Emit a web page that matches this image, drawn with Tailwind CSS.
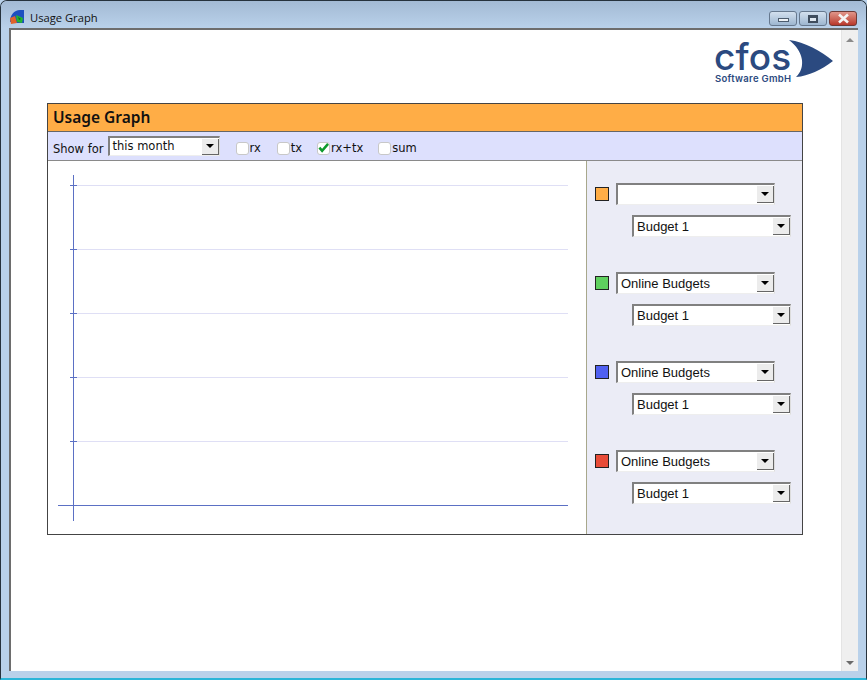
<!DOCTYPE html>
<html lang="en">
<head>
  <meta charset="UTF-8" />
  <title>Usage Graph</title>
  <script src="https://cdn.jsdelivr.net/npm/@tailwindcss/browser@4"></script>
</head>
<body class="bg-[#b9d1ea]">

  <div class="w-[867px] h-[680px] flex flex-col overflow-hidden rounded-t-[7px] border-x border-t border-[#26323c] border-b-2 border-b-[#2bb5d8] bg-[#b9d1ea]">

    <!-- TITLE BAR -->
    <header class="h-[27px] shrink-0 flex items-center justify-between pl-[8px] pr-[9px] bg-gradient-to-b from-[#a3bad4] to-[#b9d1ea]">
      <div class="flex items-center gap-[5px] mt-[5px]">
        <svg width="16" height="16" viewBox="0 0 16 16">
          <path d="M1 13 C1 6 5 1 11 1 L15 1 L15 14 L6 14 L6 12 L1 13Z" fill="#1c4fc0" />
          <path d="M1 9 L6 7 L8 14 L2 15Z" fill="#e0622a" />
          <path d="M7 6 L14 9 L13 14 L8 13Z" fill="#22b52e" />
          <path d="M9 8 L12 10 L10 11Z" fill="#0e6a20" />
        </svg>
        <span class="font-['Open_Sans'] text-[11.2px] text-[#111] mt-[2px]">Usage Graph</span>
      </div>
      <div class="flex gap-[2px] mt-[8px]">
        <div class="w-[28px] h-[15px] flex items-center justify-center rounded-[3px] border border-[#66788e] bg-gradient-to-b from-[#d3e0ee] to-[#9db6d0]">
          <div class="w-[11px] h-[4px] mt-[3px] bg-[#eef2f6] border border-[#4d5c6e]"></div>
        </div>
        <div class="w-[28px] h-[15px] flex items-center justify-center rounded-[3px] border border-[#66788e] bg-gradient-to-b from-[#d3e0ee] to-[#9db6d0]">
          <div class="w-[10px] h-[8px] border-2 border-t-[3px] border-[#3f4d5e] bg-[#dfe8f1]"></div>
        </div>
        <div class="w-[28px] h-[15px] flex items-center justify-center rounded-[3px] border border-[#6e3a36] bg-gradient-to-b from-[#e0958a] to-[#b8362a]">
          <svg width="13" height="11" viewBox="0 0 13 11"><path d="M2 1.5 L11 9.5 M11 1.5 L2 9.5" stroke="#f4f4f4" stroke-width="2.6" /></svg>
        </div>
      </div>
    </header>

    <!-- CLIENT AREA -->
    <div class="flex-1 flex mx-[8px] mb-[7px] border-t-2 border-l-2 border-[#6d6d6d] bg-white min-h-0">
      <main class="flex-1 min-w-0 flex flex-col">

        <!-- LOGO -->
        <div class="h-[73px] shrink-0 flex justify-end items-start pr-[7px] pt-[7px]">
          <div class="relative w-[120px] h-[50px]">
            <span class="absolute left-0 top-[5px] font-['Inter'] font-medium text-[37px] leading-[30px] tracking-[0.2px] text-[#2b4a80]">cfos</span>
            <span class="absolute left-px top-[36px] font-['Inter'] font-semibold text-[9.5px] leading-[11px] tracking-[0.3px] text-[#2b4a80]">Software GmbH</span>
            <svg class="absolute left-[75px] top-[3px]" width="46" height="38" viewBox="0 0 46 38">
              <path d="M0 0 C16 2 32 11 44 21 C32 30 20 36 7 37 C17 28 15 11 0 0Z" fill="#2b4a80" />
            </svg>
          </div>
        </div>

        <!-- CARD -->
        <section class="w-[756px] h-[432px] ml-[36px] flex flex-col border border-[#444]">
          <h1 class="h-[28px] shrink-0 flex items-center pl-[5px] bg-[#ffad46] font-['Noto_Sans'] font-semibold text-[15.5px] text-[#111] border-b border-[#666]">Usage Graph</h1>

          <div class="h-[29px] shrink-0 flex items-center pl-[5px] bg-[#dde0fd] border-b border-[#8a8a8a] font-['DejaVu_Sans'] text-[11.5px] text-[#111]">
            <span class="mt-[7px]">Show for</span>
            <div class="ml-[4px] w-[112px] h-[20px] flex items-center justify-between bg-white border-2 border-r border-b border-[#808080] border-r-[#ddd] border-b-[#eee]">
              <span class="pl-[3px] text-[11.5px] text-[#111]">this month</span>
              <div class="w-[17px] h-[16px] flex items-center justify-center bg-[#ececec] border-r border-b border-[#666]">
                <div class="border-x-[4px] border-t-[4px] border-x-transparent border-t-black"></div>
              </div>
            </div>
            <label class="ml-[16px] flex items-center mt-[4px]">
              <span class="w-[13px] h-[13px] rounded-[3px] border border-[#c8c8c8] bg-white"></span><span class="ml-px mt-px">rx</span>
            </label>
            <label class="ml-[16px] flex items-center mt-[4px]">
              <span class="w-[13px] h-[13px] rounded-[3px] border border-[#c8c8c8] bg-white"></span><span class="ml-px mt-px">tx</span>
            </label>
            <label class="ml-[15px] flex items-center mt-[4px]">
              <span class="w-[13px] h-[13px] rounded-[3px] border border-[#c8c8c8] bg-white flex items-center justify-center">
                <svg width="12" height="11" viewBox="0 0 12 11"><path d="M1.5 4.5 L4.5 8 L11 0.5" fill="none" stroke="#0e9a2c" stroke-width="2.8" /></svg>
              </span><span class="ml-px mt-px">rx+tx</span>
            </label>
            <label class="ml-[15px] flex items-center mt-[4px]">
              <span class="w-[13px] h-[13px] rounded-[3px] border border-[#c8c8c8] bg-white"></span><span class="ml-px mt-px">sum</span>
            </label>
          </div>

          <div class="flex-1 flex min-h-0">
            <!-- CHART -->
            <div class="w-[538px] shrink-0 bg-white">
              <svg width="538" height="373" viewBox="0 0 538 373">
                <g stroke="#dfdff5" stroke-width="1">
                  <path d="M26 24.5 H520" /><path d="M26 88.5 H520" /><path d="M26 152.5 H520" /><path d="M26 216.5 H520" /><path d="M26 280.5 H520" />
                </g>
                <g stroke="#5b70c4" stroke-width="1">
                  <path d="M25.5 14 V360" />
                  <path d="M10 344.5 H520" />
                  <path d="M22 24.5 H29" /><path d="M22 88.5 H29" /><path d="M22 152.5 H29" /><path d="M22 216.5 H29" /><path d="M22 280.5 H29" />
                </g>
              </svg>
            </div>

            <!-- SIDE PANEL -->
            <aside class="flex-1 bg-[#ebecf6] border-l border-[#a8a88c] pt-[22px] pl-[8px] font-['Liberation_Sans'] text-[13px] text-[#111] flex flex-col gap-[35px]">
              <div class="flex flex-col gap-[10px]">
                <div class="flex items-center gap-[7px]">
                  <span class="w-[14px] h-[14px] border border-[#222] bg-[#ffad46]"></span>
                  <div class="w-[159px] h-[22px] flex items-center justify-between bg-white border-2 border-r border-b border-[#808080] border-r-[#ddd] border-b-[#eee]">
                    <span class="pl-[3px]"></span>
                    <div class="w-[17px] h-[17px] flex items-center justify-center bg-[#ececec] border-r border-b border-[#666]"><div class="border-x-[4px] border-t-[4px] border-x-transparent border-t-black"></div></div>
                  </div>
                </div>
                <div class="ml-[37px] w-[159px] h-[22px] flex items-center justify-between bg-white border-2 border-r border-b border-[#808080] border-r-[#ddd] border-b-[#eee]">
                  <span class="pl-[3px]">Budget 1</span>
                  <div class="w-[17px] h-[17px] flex items-center justify-center bg-[#ececec] border-r border-b border-[#666]"><div class="border-x-[4px] border-t-[4px] border-x-transparent border-t-black"></div></div>
                </div>
              </div>
              <div class="flex flex-col gap-[10px]">
                <div class="flex items-center gap-[7px]">
                  <span class="w-[14px] h-[14px] border border-[#222] bg-[#5fd05f]"></span>
                  <div class="w-[159px] h-[22px] flex items-center justify-between bg-white border-2 border-r border-b border-[#808080] border-r-[#ddd] border-b-[#eee]">
                    <span class="pl-[3px]">Online Budgets</span>
                    <div class="w-[17px] h-[17px] flex items-center justify-center bg-[#ececec] border-r border-b border-[#666]"><div class="border-x-[4px] border-t-[4px] border-x-transparent border-t-black"></div></div>
                  </div>
                </div>
                <div class="ml-[37px] w-[159px] h-[22px] flex items-center justify-between bg-white border-2 border-r border-b border-[#808080] border-r-[#ddd] border-b-[#eee]">
                  <span class="pl-[3px]">Budget 1</span>
                  <div class="w-[17px] h-[17px] flex items-center justify-center bg-[#ececec] border-r border-b border-[#666]"><div class="border-x-[4px] border-t-[4px] border-x-transparent border-t-black"></div></div>
                </div>
              </div>
              <div class="flex flex-col gap-[10px]">
                <div class="flex items-center gap-[7px]">
                  <span class="w-[14px] h-[14px] border border-[#222] bg-[#5060f0]"></span>
                  <div class="w-[159px] h-[22px] flex items-center justify-between bg-white border-2 border-r border-b border-[#808080] border-r-[#ddd] border-b-[#eee]">
                    <span class="pl-[3px]">Online Budgets</span>
                    <div class="w-[17px] h-[17px] flex items-center justify-center bg-[#ececec] border-r border-b border-[#666]"><div class="border-x-[4px] border-t-[4px] border-x-transparent border-t-black"></div></div>
                  </div>
                </div>
                <div class="ml-[37px] w-[159px] h-[22px] flex items-center justify-between bg-white border-2 border-r border-b border-[#808080] border-r-[#ddd] border-b-[#eee]">
                  <span class="pl-[3px]">Budget 1</span>
                  <div class="w-[17px] h-[17px] flex items-center justify-center bg-[#ececec] border-r border-b border-[#666]"><div class="border-x-[4px] border-t-[4px] border-x-transparent border-t-black"></div></div>
                </div>
              </div>
              <div class="flex flex-col gap-[10px]">
                <div class="flex items-center gap-[7px]">
                  <span class="w-[14px] h-[14px] border border-[#222] bg-[#e84c38]"></span>
                  <div class="w-[159px] h-[22px] flex items-center justify-between bg-white border-2 border-r border-b border-[#808080] border-r-[#ddd] border-b-[#eee]">
                    <span class="pl-[3px]">Online Budgets</span>
                    <div class="w-[17px] h-[17px] flex items-center justify-center bg-[#ececec] border-r border-b border-[#666]"><div class="border-x-[4px] border-t-[4px] border-x-transparent border-t-black"></div></div>
                  </div>
                </div>
                <div class="ml-[37px] w-[159px] h-[22px] flex items-center justify-between bg-white border-2 border-r border-b border-[#808080] border-r-[#ddd] border-b-[#eee]">
                  <span class="pl-[3px]">Budget 1</span>
                  <div class="w-[17px] h-[17px] flex items-center justify-center bg-[#ececec] border-r border-b border-[#666]"><div class="border-x-[4px] border-t-[4px] border-x-transparent border-t-black"></div></div>
                </div>
              </div>
            </aside>
          </div>
        </section>
      </main>

      <!-- SCROLLBAR -->
      <div class="w-[17px] shrink-0 flex flex-col justify-between items-center pt-[8px] pb-[6px] bg-[#efefef] border-l border-[#e4e4e4]">
        <div class="border-x-[4px] border-b-[4px] border-x-transparent border-b-[#8a8a8a]"></div>
        <div class="border-x-[4px] border-t-[4px] border-x-transparent border-t-[#6a6a6a]"></div>
      </div>
    </div>
  </div>
</body>
</html>
